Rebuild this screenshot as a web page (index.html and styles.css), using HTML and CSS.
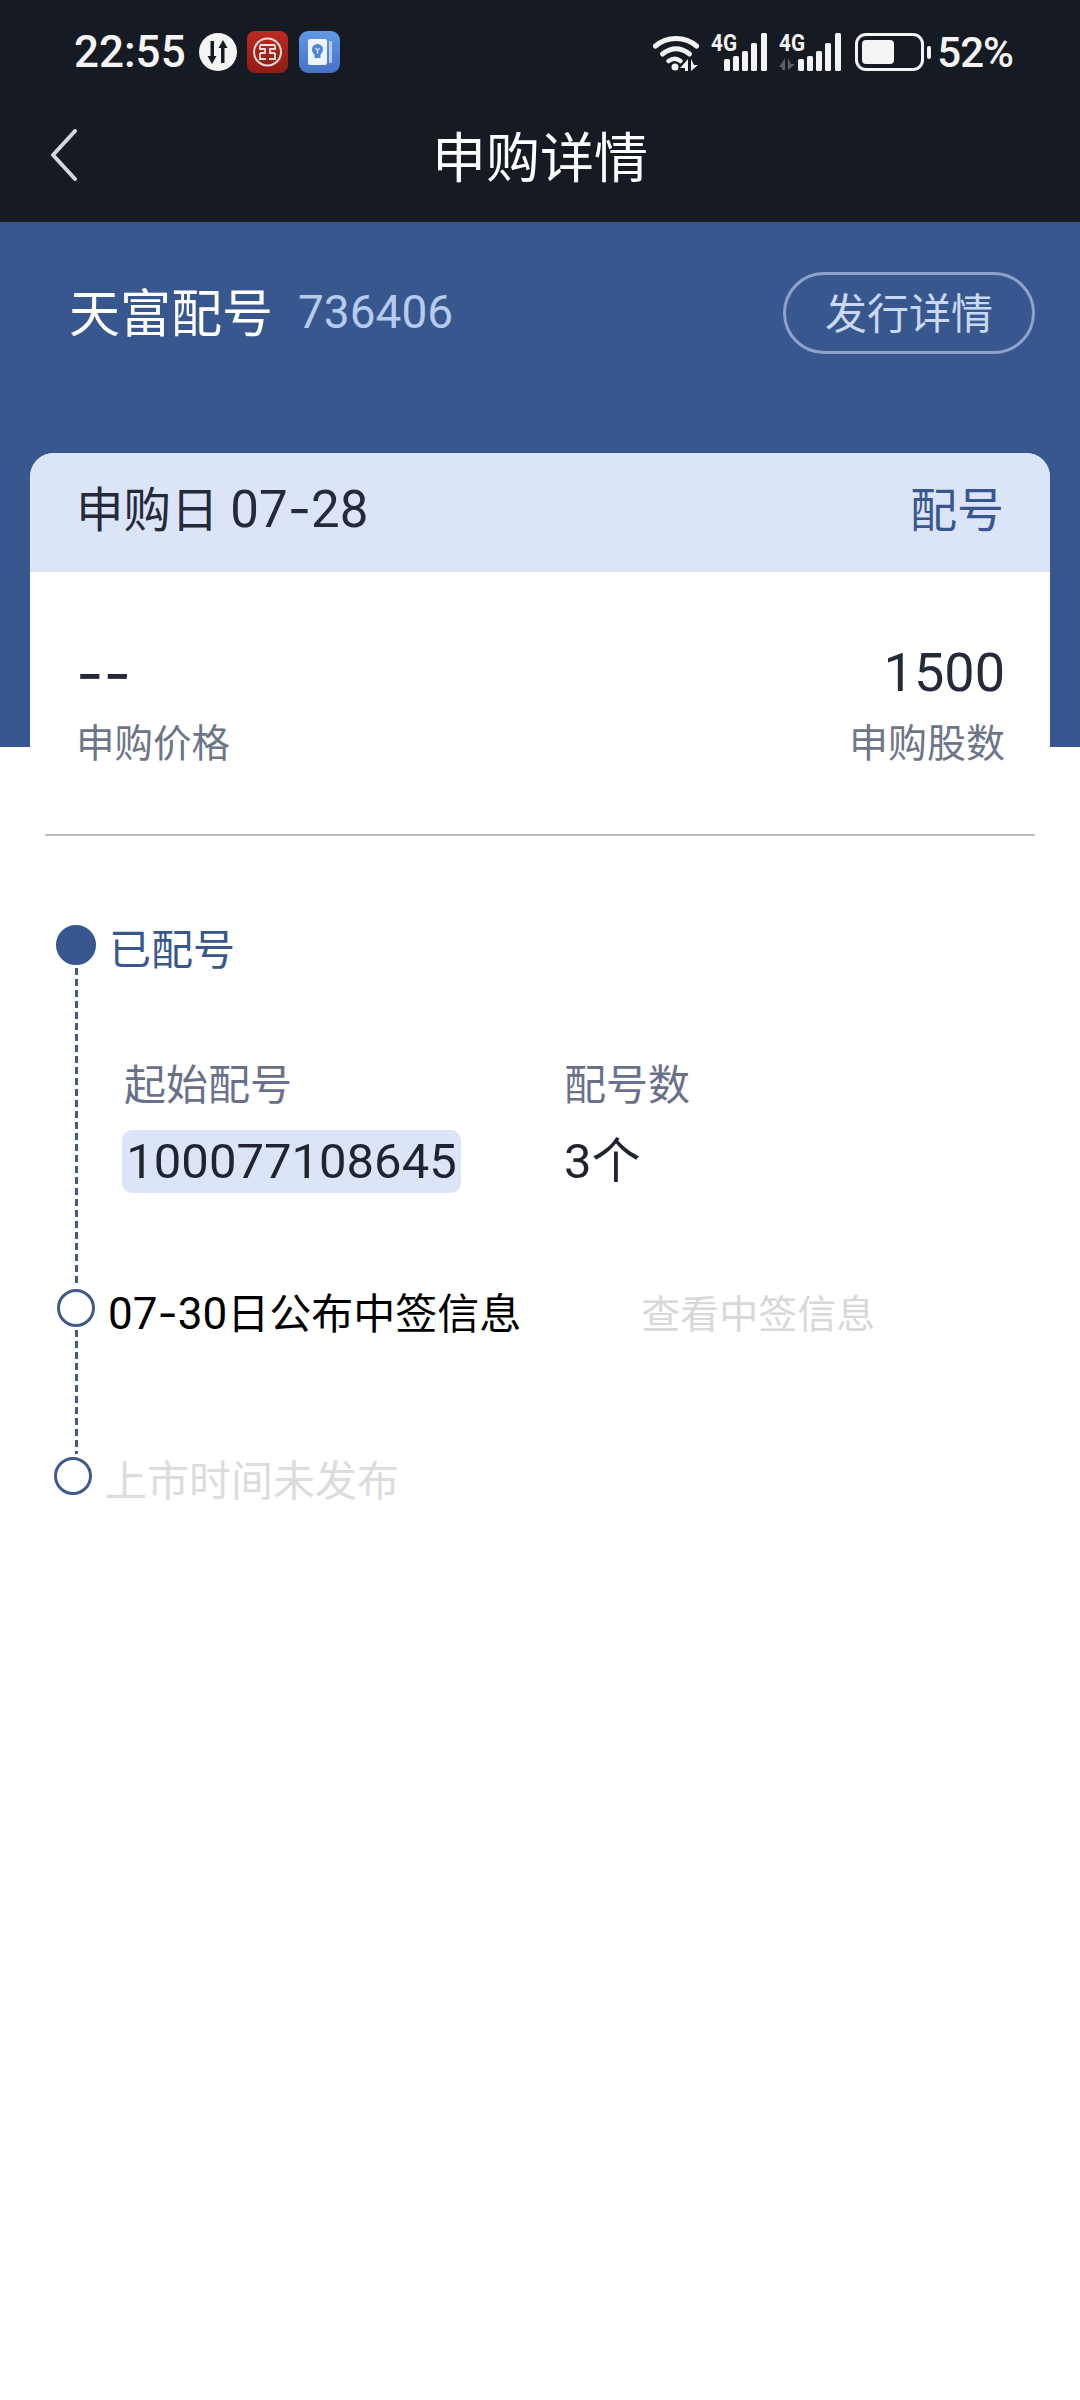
FILE: index.html
```html
<!DOCTYPE html>
<html lang="zh-CN">
<head>
    <meta charset="UTF-8" />
    <title>申购详情</title>
    <link rel="stylesheet" href="styles.css">
</head>
<body>
    <header class="topbar">
        <div class="status">
            <div class="status-left">
                <span class="clock">22:55</span>
                <svg class="ic-sync" width="38" height="38" viewBox="0 0 38 38">
                    <circle cx="19" cy="19" r="19" fill="#f4f4f4"/>
                    <path d="M15 8v15h2.500l-4.500 8-4.500-8h3V8z" fill="#161a22"/>
                    <path d="M22 30V15h-2.500l4.500-8 4.500 8h-3v15z" fill="#161a22"/>
                </svg>
                <svg class="ic-app" width="41" height="42" viewBox="0 0 41 42">
                    <defs>
                        <linearGradient id="red" x1="0" y1="0" x2="0" y2="1">
                            <stop offset="0" stop-color="#bb2a22"/>
                            <stop offset="1" stop-color="#901c14"/>
                        </linearGradient>
                        <linearGradient id="blue" x1="0" y1="0" x2="0" y2="1">
                            <stop offset="0" stop-color="#6199e6"/>
                            <stop offset="1" stop-color="#4871c6"/>
                        </linearGradient>
                    </defs>
                    <rect width="41" height="42" rx="8" fill="url(#red)"/>
                    <circle cx="20.500" cy="21" r="13.500" fill="none" stroke="#f3dcd8" stroke-width="2"/>
                    <path d="M13 14h15M13 14v4h5v4h-5M28 14v4h-5v4h5M13 22v6h6M28 22v6h-6" fill="none" stroke="#f3dcd8" stroke-width="1.800"/>
                </svg>
                <svg class="ic-app" width="41" height="42" viewBox="0 0 41 42">
                    <rect width="41" height="42" rx="9" fill="url(#blue)"/>
                    <rect x="30" y="10" width="3" height="22" rx="1" fill="#b5cdf4"/>
                    <rect x="9" y="8" width="19" height="26" rx="2" fill="#eef3fc"/>
                    <circle cx="18.500" cy="18.500" r="5.500" fill="#4d86d8"/>
                    <rect x="15.500" y="23" width="6" height="4" fill="#4d86d8"/>
                    <path d="M16.500 17l2 2.500 2-2.500M18.500 19.500v3" stroke="#eef3fc" stroke-width="1.200" fill="none"/>
                </svg>
            </div>
            <div class="status-right">
                <svg class="ic-wifi" width="46" height="37" viewBox="0 0 46 37">
                    <path d="M2.500 12C14 2 32 2 43.500 12" fill="none" stroke="#f4f4f4" stroke-width="5" stroke-linecap="round"/>
                    <path d="M9.500 20c9-7 18-7 27 0" fill="none" stroke="#f4f4f4" stroke-width="5" stroke-linecap="round"/>
                    <path d="M15.500 27c4-3 8-3 12 0" fill="none" stroke="#f4f4f4" stroke-width="4.500" stroke-linecap="round"/>
                    <circle cx="22" cy="33" r="3.500" fill="#f4f4f4"/>
                    <path d="M35 25v12h-3v-3h-5z" fill="#f4f4f4"/>
                    <path d="M38 25v12l7-6h-4z" fill="#f4f4f4"/>
                </svg>
                <svg class="ic-signal" width="56" height="46" viewBox="0 -8 56 46">
                    <text x="0" y="18" class="net" textLength="26" lengthAdjust="spacingAndGlyphs">4G</text>
                    <rect x="13" y="26" width="6" height="12" rx="1.500"/>
                    <rect x="22" y="23" width="6" height="15" rx="1.500"/>
                    <rect x="31" y="18" width="6" height="20" rx="1.500"/>
                    <rect x="40" y="10" width="6" height="28" rx="1.500"/>
                    <rect x="50" y="0" width="6" height="38" rx="1.500"/>
                </svg>
                <svg class="ic-signal" width="62" height="46" viewBox="0 -8 62 46">
                    <text x="0" y="18" class="net" textLength="26" lengthAdjust="spacingAndGlyphs">4G</text>
                    <path d="M6 25v12H3v-3H0zM9 25v12l7-6h-4z" fill="#5c5e64"/>
                    <rect x="19" y="26" width="6" height="12" rx="1.500"/>
                    <rect x="28" y="23" width="6" height="15" rx="1.500"/>
                    <rect x="37" y="18" width="6" height="20" rx="1.500"/>
                    <rect x="46" y="10" width="6" height="28" rx="1.500"/>
                    <rect x="56" y="0" width="6" height="38" rx="1.500"/>
                </svg>
                <div class="battery">
                    <div class="battery-box"><div class="battery-fill"></div></div>
                    <div class="battery-tip"></div>
                </div>
                <span class="percent">52%</span>
            </div>
        </div>
        <nav class="navbar">
            <svg class="ic-back" width="28" height="52" viewBox="0 0 28 52">
                <path d="M25 2L3 26l22 24" fill="none" stroke="#d4d6da" stroke-width="4" stroke-linecap="round" stroke-linejoin="round"/>
            </svg>
            <h1 class="page-title">申购详情</h1>
        </nav>
    </header>

    <section class="hero">
        <div class="stock">
            <span class="stock-name">天富配号</span>
            <span class="stock-code">736406</span>
        </div>
        <a class="issue-btn">发行详情</a>
    </section>

    <main class="card">
        <div class="card-head">
            <span class="card-date">申购日 <span class="num">07<span class="dash">-</span>28</span></span>
            <span class="card-type">配号</span>
        </div>
        <div class="card-body">
            <div class="stat">
                <div class="stat-value"><span class="dash">--</span></div>
                <div class="stat-label">申购价格</div>
            </div>
            <div class="stat stat-right">
                <div class="stat-value">1500</div>
                <div class="stat-label">申购股数</div>
            </div>
        </div>
        <div class="divider"></div>
    </main>

    <section class="timeline">
        <div class="step step-done">
            <span class="dot dot-fill"></span>
            <span class="step-text">已配号</span>
        </div>
        <div class="step-body">
            <div class="field first">
                <div class="field-label">起始配号</div>
                <div class="field-value mark">100077108645</div>
            </div>
            <div class="field">
                <div class="field-label">配号数</div>
                <div class="field-value">3个</div>
            </div>
        </div>
        <div class="step">
            <span class="dot"></span>
            <span class="step-text step-now"><span class="num">07<span class="dash">-</span>30</span>日公布中签信息</span>
            <a class="step-link">查看中签信息</a>
        </div>
        <div class="step-body short"></div>
        <div class="step step-last">
            <span class="dot"></span>
            <span class="step-text step-off">上市时间未发布</span>
        </div>
    </section>
</body>
</html>
```

FILE: styles.css
```css
*{
    box-sizing: border-box;
}
body{
    margin: 0;
    min-height: 2400px;
    background: #fff;
    font-family: Roboto, "Noto Sans CJK SC", sans-serif;
}
a{
    text-decoration: none;
}
/* the long dash of the phone font */
.dash{
    font-family: Inter, sans-serif;
}

/* top dark area */
.topbar{
    background: #161a22;
    height: 222px;
}
.status{
    height: 104px;
    padding: 0 67px 0 74px;
    display: flex;
    justify-content: space-between;
    align-items: center;
    color: #f4f4f4;
}
.status-left{
    display: flex;
    align-items: center;
}
.status-right{
    display: flex;
    align-items: center;
}
.clock{
    font-size: 44px;
    font-weight: 500;
    margin-right: 13px;
}
.ic-app{
    margin-left: 11px;
}
.ic-sync{
    margin-right: -1px;
}
.ic-signal{
    margin: -8px 0 0 12px;
    fill: #f4f4f4;
}
.net{
    font-family: Roboto, sans-serif;
    font-size: 24px;
    font-weight: 700;
}
.battery{
    display: flex;
    align-items: center;
    margin-left: 14px;
}
.battery-box{
    width: 69px;
    height: 38px;
    border: 3px solid #f4f4f4;
    border-radius: 11px;
    padding: 4px;
}
.battery-fill{
    width: 32px;
    height: 100%;
    background: #f4f4f4;
    border-radius: 4px;
}
.battery-tip{
    width: 4px;
    height: 13px;
    background: #f4f4f4;
    border-radius: 2px;
    margin-left: 3px;
}
.percent{
    font-size: 42px;
    font-weight: 500;
    letter-spacing: -1px;
    margin-left: 6px;
}

.navbar{
    height: 104px;
    display: grid;
    grid-template-columns: 1fr auto 1fr;
    align-items: center;
    padding: 0 0 3px 50px;
}
.page-title{
    margin: 0 0 0 -50px;
    font-size: 54px;
    font-weight: 400;
    color: #fff;
}

/* blue band */
.hero{
    height: 525px;
    background: #39578f;
    padding: 50px 45px 0 69px;
    display: flex;
    justify-content: space-between;
    align-items: flex-start;
}
.stock{
    height: 82px;
    padding-bottom: 6px;
    display: flex;
    align-items: center;
}
.stock-name{
    font-size: 51px;
    font-weight: 400;
    color: #fff;
}
.stock-code{
    font-size: 46px;
    font-weight: 400;
    color: #b7cbee;
    margin-left: 25px;
    margin-top: 4px;
}
.issue-btn{
    width: 252px;
    height: 82px;
    padding-bottom: 5px;
    border: 3px solid #8da2cc;
    border-radius: 41px;
    display: flex;
    justify-content: center;
    align-items: center;
    font-size: 42px;
    color: #c9d8f4;
}

/* card overlaps the blue band */
.card{
    margin: -294px 30px 0;
    background: #fff;
    border-radius: 24px 24px 0 0;
}
.card-head{
    height: 119px;
    background: #dce5f7;
    border-radius: 24px 24px 0 0;
    padding: 0 46px 12px 46px;
    display: flex;
    justify-content: space-between;
    align-items: center;
}
.card-date{
    font-size: 47.500px;
    color: #252a3a;
}
.card-date .num{
    font-size: 51px;
}
.card-type{
    font-size: 47px;
    color: #39578f;
}
.card-body{
    padding: 69px 45px 65px 46px;
    display: flex;
    justify-content: space-between;
}
.stat-right{
    text-align: right;
}
.stat-value{
    height: 64px;
    line-height: 64px;
    font-size: 54px;
    color: #252a3a;
}
.stat-value .dash{
    font-size: 60px;
}
.stat-label{
    height: 50px;
    line-height: 50px;
    margin-top: 14px;
    font-size: 38.500px;
    color: #6d7587;
}
.stat-right .stat-label{
    font-size: 39px;
}
.divider{
    height: 2px;
    margin: 0 15px;
    background: #bcbcbc;
}

/* timeline */
.timeline{
    padding: 89px 0 0 57px;
}
.step{
    display: flex;
    align-items: center;
    height: 38px;
}
.step-done{
    height: 40px;
    margin-left: -1px;
}
.step-last{
    margin-left: -3px;
}
.dot{
    width: 38px;
    height: 38px;
    border: 3px solid #40598f;
    border-radius: 50%;
    flex-shrink: 0;
    margin-right: 13px;
}
.dot-fill{
    width: 40px;
    height: 40px;
    background: #39578f;
    border-color: #39578f;
}
.step-text{
    font-size: 42px;
    white-space: nowrap;
}
.step-done .step-text{
    color: #39578f;
    margin-top: 3px;
}
.step-now{
    color: #000;
    margin-top: 5px;
}
.step-now .num{
    font-size: 44px;
}
.step-off{
    color: #dcdcdc;
    margin-top: 3px;
}
.step-link{
    font-size: 39px;
    color: #d8d8d8;
    margin-left: 120px;
    margin-top: 6px;
}
.step-body{
    margin: 3px 0 3px 18px;
    height: 318px;
    background: linear-gradient(#40598f 7px, transparent 7px) left top / 3px 11px repeat-y;
    padding: 93px 0 0 47px;
    display: flex;
}
.step-body.short{
    height: 124px;
    padding: 0;
}
.field.first{
    width: 442px;
}
.field-label{
    height: 50px;
    line-height: 50px;
    font-size: 42px;
    color: #69718a;
    padding-left: 2px;
}
.field:not(.first) .field-label{
    padding-left: 0;
}
.field-value{
    margin-top: 19px;
    height: 63px;
    line-height: 63px;
    font-size: 49px;
    color: #1f2430;
}
.mark{
    width: 339px;
    background: #dce5f7;
    border-radius: 10px;
    text-align: center;
}
```
